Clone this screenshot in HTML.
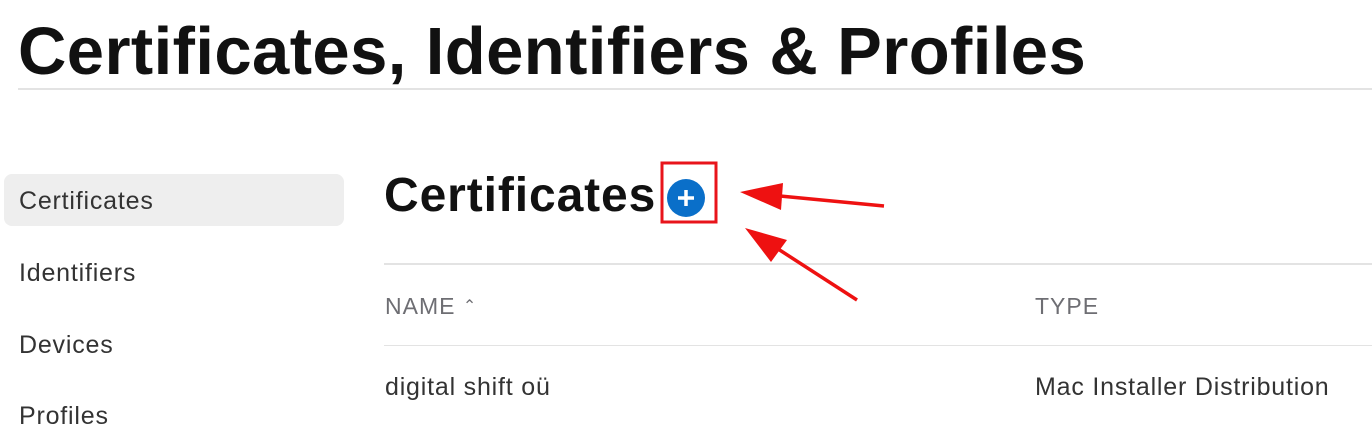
<!DOCTYPE html>
<html><head><style>
body{margin:0;width:1372px;height:426px;overflow:hidden;background:#fff;font-family:"Liberation Sans",Arial,sans-serif;position:relative}
div,span{position:absolute;white-space:nowrap}
.s{font-size:25px;color:#333;letter-spacing:0.8px}
</style></head><body>
<div style="left:18px;top:13px;font-size:67px;font-weight:bold;color:#111;letter-spacing:0.4px">Certificates, Identifiers &amp; Profiles</div>
<div style="left:18px;top:88px;width:1354px;height:2px;background:#e3e3e3"></div>
<div style="left:4px;top:174px;width:340px;height:52px;background:#eeeeee;border-radius:8px"></div>
<div class="s" style="left:19px;top:187px">Certificates</div>
<div class="s" style="left:19px;top:259px">Identifiers</div>
<div class="s" style="left:19px;top:331px">Devices</div>
<div class="s" style="left:19px;top:402px">Profiles</div>
<div style="left:384px;top:168px;font-size:48px;font-weight:bold;color:#111;letter-spacing:0.9px">Certificates</div>
<div style="left:384px;top:263px;width:988px;height:2px;background:#e3e3e3"></div>
<div style="left:385px;top:293px;font-size:23px;color:#6e6e73;letter-spacing:1px">NAME <span style="position:relative;font-size:16px;top:-3px">&#8963;</span></div>
<div style="left:1035px;top:293px;font-size:23px;color:#6e6e73;letter-spacing:1px">TYPE</div>
<div style="left:384px;top:345px;width:988px;height:1px;background:#e3e3e3"></div>
<div class="s" style="left:385px;top:373px">digital shift oü</div>
<div class="s" style="left:1035px;top:373px">Mac Installer Distribution</div>
<svg style="position:absolute;left:0;top:0" width="1372" height="426">
<rect x="662" y="163" width="54" height="59" fill="none" stroke="#e8141b" stroke-width="3"/>
<circle cx="686" cy="198" r="19" fill="#0a6fc9"/>
<path d="M686 190v16M678 198h16" stroke="#fff" stroke-width="3.5"/>
<line x1="884" y1="206" x2="780" y2="196" stroke="#ee1111" stroke-width="3.5"/>
<polygon points="740,192 783,183 781,210" fill="#ee1111"/>
<line x1="857" y1="300" x2="775" y2="247" stroke="#ee1111" stroke-width="3.5"/>
<polygon points="745,228 787,240 771,262" fill="#ee1111"/>
</svg>
</body></html>
